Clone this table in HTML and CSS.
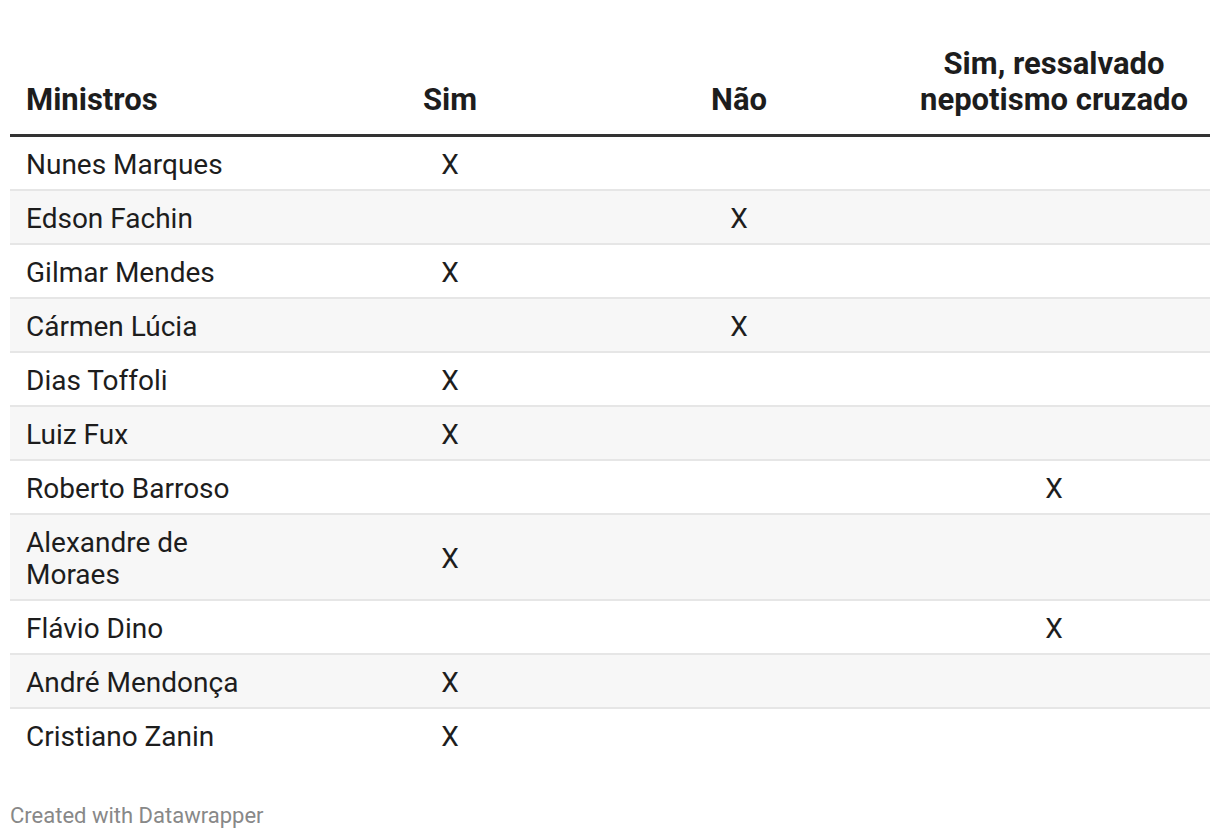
FILE: index.html
```html
<!DOCTYPE html>
<html lang="pt">
<head>
<meta charset="utf-8">
<title>Ministros</title>
<link rel="stylesheet" href="styles.css">
</head>
<body>
<div class="chart">
  <table class="dw-table">
    <colgroup>
      <col class="c-name">
      <col class="c-sim">
      <col class="c-nao">
      <col class="c-ress">
    </colgroup>
    <thead>
      <tr>
        <th class="name">Ministros</th>
        <th class="sim">Sim</th>
        <th class="nao">Não</th>
        <th class="ress">Sim, ressalvado nepotismo cruzado</th>
      </tr>
    </thead>
    <tbody>
      <tr><td class="name">Nunes Marques</td><td class="sim">X</td><td class="nao"></td><td class="ress"></td></tr>
      <tr><td class="name">Edson Fachin</td><td class="sim"></td><td class="nao">X</td><td class="ress"></td></tr>
      <tr><td class="name">Gilmar Mendes</td><td class="sim">X</td><td class="nao"></td><td class="ress"></td></tr>
      <tr><td class="name">Cármen Lúcia</td><td class="sim"></td><td class="nao">X</td><td class="ress"></td></tr>
      <tr><td class="name">Dias Toffoli</td><td class="sim">X</td><td class="nao"></td><td class="ress"></td></tr>
      <tr><td class="name">Luiz Fux</td><td class="sim">X</td><td class="nao"></td><td class="ress"></td></tr>
      <tr><td class="name">Roberto Barroso</td><td class="sim"></td><td class="nao"></td><td class="ress">X</td></tr>
      <tr><td class="name">Alexandre de Moraes</td><td class="sim">X</td><td class="nao"></td><td class="ress"></td></tr>
      <tr><td class="name">Flávio Dino</td><td class="sim"></td><td class="nao"></td><td class="ress">X</td></tr>
      <tr><td class="name">André Mendonça</td><td class="sim">X</td><td class="nao"></td><td class="ress"></td></tr>
      <tr><td class="name">Cristiano Zanin</td><td class="sim">X</td><td class="nao"></td><td class="ress"></td></tr>
    </tbody>
  </table>
  <div class="footer">Created with Datawrapper</div>
</div>
</body>
</html>
```

FILE: styles.css
```css
html, body {
  margin: 0;
  padding: 0;
  background: #ffffff;
}

body {
  font-family: Roboto, "Liberation Sans", Arial, sans-serif;
  color: #1d1d1d;
}

.chart {
  padding: 0 10px;
}

.dw-table {
  width: 1200px;
  table-layout: fixed;
  border-collapse: collapse;
  font-size: 28px;
  line-height: 32px;
}

.c-name { width: 260px; }
.c-sim { width: 360px; }
.c-nao { width: 218px; }
.c-ress { width: 362px; }

.dw-table th {
  font-size: 31px;
  line-height: 36px;
  font-weight: 700;
  vertical-align: bottom;
  padding: 46px 0 16px;
  border-bottom: 3px solid #333333;
  text-align: center;
}

.dw-table td {
  padding: 12px 0 8px;
  text-align: center;
  vertical-align: middle;
}

.dw-table .name {
  text-align: left;
  padding-left: 16px;
}

.dw-table .ress {
  padding-left: 50px;
}

.dw-table tbody tr {
  border-bottom: 2px solid #e6e6e6;
}

.dw-table tbody tr:last-child {
  border-bottom: none;
}

.dw-table tbody tr:nth-child(even) {
  background: #f7f7f7;
}

.footer {
  margin-top: 43px;
  font-size: 22px;
  line-height: 24px;
  color: #888888;
}
```
